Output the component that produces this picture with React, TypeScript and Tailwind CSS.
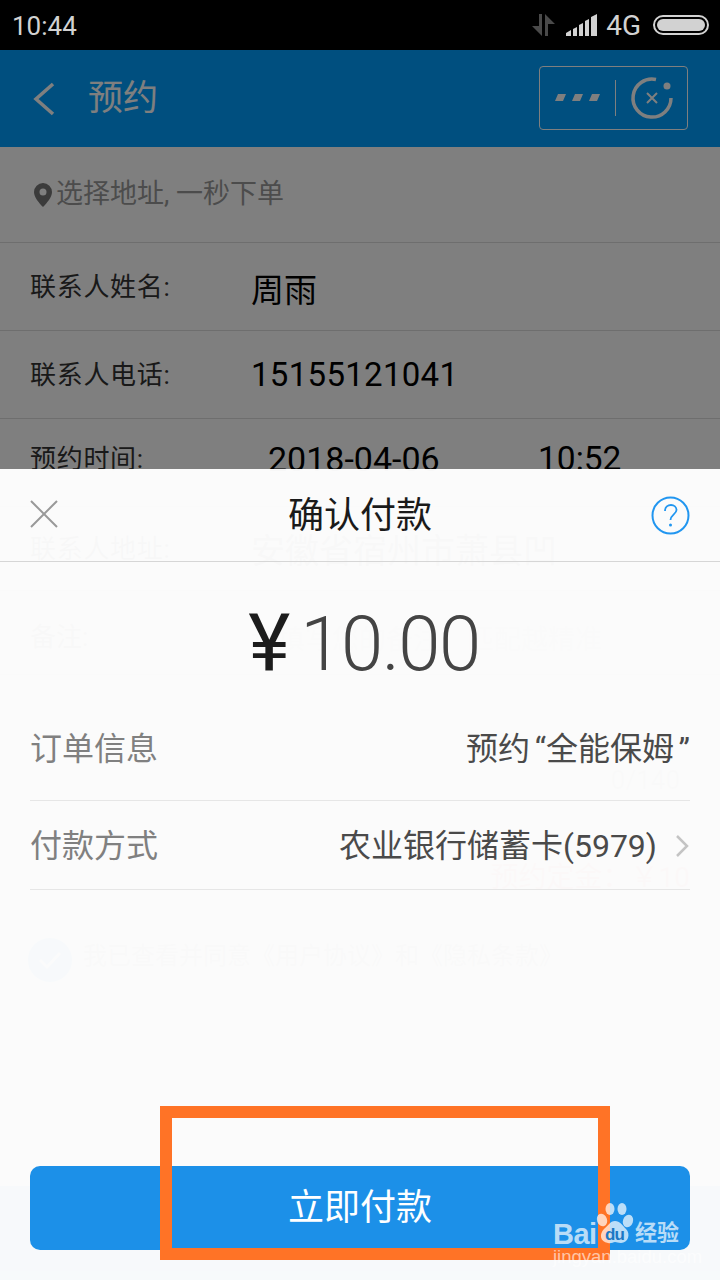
import React from "react";

const font = { fontFamily: 'Roboto, "Noto Sans CJK SC", sans-serif' };
const arial = { fontFamily: '"Liberation Sans", sans-serif' };

function Row({ label, value, valueClass, h }: { label: string; value: string; valueClass: string; h: string }) {
  return (
    <div className={`flex items-center border-b border-[#dcdcdc] ${h}`}>
      <span className="w-[251px] shrink-0 pl-[30px] text-[26px] leading-[36px] tracking-[0.7px] text-[#333]">{label}</span>
      <span className={valueClass}>{value}</span>
    </div>
  );
}

function Watermark() {
  return (
    <div className="absolute left-[553px] top-[1203px] h-[60px] w-[130px] text-white/70">
      <span className="absolute left-0 top-[15px] text-[29px] font-bold leading-[32px] tracking-[-0.5px]" style={arial}>Bai</span>
      <svg className="absolute left-[42px] top-0" width="42" height="44" viewBox="0 0 42 44" fill="currentColor">
        <ellipse cx="7" cy="17" rx="5" ry="6.500" transform="rotate(-20 7 17)" />
        <ellipse cx="15" cy="6" rx="4.500" ry="6" />
        <ellipse cx="27" cy="6" rx="4.500" ry="6" />
        <ellipse cx="33" cy="18" rx="5" ry="6.500" transform="rotate(20 33 18)" />
        <path d="M20 18c5 0 7 4 11 8 5 5 2 14-5 14-3 0-4-1-6-1s-4 2-7 1c-8-1-9-9-4-14 4-3 6-8 11-8z" />
      </svg>
      <span className="absolute left-[52px] top-[22px] text-[17px] font-bold leading-[20px] tracking-[-1px] text-[#1c78c4]" style={arial}>du</span>
      <span className="absolute left-[82px] top-[16px] text-[22px] font-bold leading-[28px]">经验</span>
      <span className="absolute left-0 top-[43px] whitespace-nowrap text-[18.500px] leading-[22px] text-white/60" style={arial}>jingyan.baidu.com</span>
    </div>
  );
}

export default function App() {
  return (
    <div className="relative flex h-[1280px] w-[720px] flex-col overflow-hidden bg-white" style={font}>
      {/* status bar */}
      <div className="flex h-[50px] shrink-0 items-center bg-black pl-[12px] pr-[11px] text-[#d2d2d2]">
        <span className="pt-[2px] text-[26px] leading-none">10:44</span>
        <div className="ml-auto flex items-center">
          <svg width="23" height="22" viewBox="0 0 23 22" fill="#4a4a4a">
            <path d="M0 12h7V0h3v22L0 12z" />
            <path d="M13 0l10 10h-7v12h-3V0z" />
          </svg>
          <svg className="ml-[11px]" width="32" height="22" viewBox="0 0 32 22" fill="#d2d2d2">
            <path d="M0 19l5-3v6H0zM7 15l4-2v9H7zM13 11l4-2v13h-4zM19 7l4-2v17h-4zM25 3l6-3v22h-6z" />
          </svg>
          <span className="ml-[8px] pt-[2px] text-[28px] leading-none">4G</span>
          <div className="ml-[12px] flex h-[20px] w-[56px] items-center rounded-[10px] border-2 border-[#d2d2d2] p-[2px]">
            <div className="h-full w-full rounded-[7px] bg-[#d2d2d2]" />
          </div>
        </div>
      </div>

      {/* page under the sheet */}
      <div className="flex h-[97px] shrink-0 items-center bg-[#009fff] pl-[32px] pr-[32px] text-white">
        <svg width="24" height="34" viewBox="0 0 24 34" fill="none" stroke="currentColor" strokeWidth="3.500">
          <path d="M21 2L4 17l17 15" />
        </svg>
        <span className="ml-[32px] pt-[2px] text-[35px]">预约</span>
        <div className="mb-[2px] ml-auto flex h-[64px] w-[149px] items-center rounded-[4px] border border-white">
          <svg className="ml-[15px]" width="45" height="7" viewBox="0 0 45 7" fill="currentColor">
            <path d="M3 0h8L8 7H0zM20 0h8l-3 7h-8zM37 0h8l-3 7h-8z" />
          </svg>
          <div className="ml-[15px] h-[36px] w-px bg-white" />
          <svg className="ml-[13px]" width="46" height="46" viewBox="0 0 46 46" fill="none" stroke="currentColor">
            <path d="M27 4.500A19 19 0 1 0 42 23" strokeWidth="3.500" />
            <circle cx="38" cy="11" r="3.500" fill="currentColor" stroke="none" />
            <path d="M18 18l10 10M28 18L18 28" strokeWidth="2" />
          </svg>
        </div>
      </div>

      <div className="flex h-[96px] shrink-0 items-center border-b border-[#dcdcdc] pl-[34px] text-[27px] text-[#999]">
        <svg width="18" height="24" viewBox="0 0 18 24" fill="#777" fillRule="evenodd">
          <path d="M9 0a9 9 0 0 1 9 9c0 5-5 11-9 15C5 20 0 14 0 9a9 9 0 0 1 9-9zm0 5.500a3.500 3.500 0 1 0 0 7 3.500 3.500 0 0 0 0-7z" />
        </svg>
        <span className="ml-[4px]">选择地址, 一秒下单</span>
      </div>
      <Row h="h-[88px] shrink-0" label="联系人姓名:" value="周雨" valueClass="pt-[8px] text-[33px] leading-[40px] text-black" />
      <Row h="h-[88px] shrink-0" label="联系人电话:" value="15155121041" valueClass="text-[33px] tracking-[0.3px] text-black" />
      <div className="flex h-[88px] shrink-0 items-center border-b border-[#dcdcdc] pb-[8px] pl-[30px] text-black">
        <span className="w-[238px] shrink-0 text-[26px] leading-[36px] tracking-[0.7px] text-[#333]">预约时间:</span>
        <span className="w-[270px] text-[34px] leading-[40px]">2018-04-06</span>
        <span className="text-[33.500px] leading-[40px]">10:52</span>
      </div>
      <Row h="h-[84px] shrink-0" label="联系人地址:" value="安徽省宿州市萧县凹" valueClass="pt-[4px] text-[34px] leading-[40px] text-[#444]" />
      <div className="flex h-[84px] shrink-0 items-center border-b border-[#dcdcdc] pt-[8px] text-[#555]">
        <span className="w-[251px] shrink-0 pl-[30px] text-[26px] leading-[36px]">备注:</span>
        <span className="whitespace-nowrap pt-[6px] text-[27px] leading-[36px] text-[#bbb]">请填写您的备注，匹配越精准</span>
      </div>
      <div className="h-[263px] shrink-0 pt-[90px] text-right">
        <div className="pr-[40px] text-[26px] leading-[30px] text-[#aaa]">0/140</div>
        <div className="mt-[66px] pr-[30px] text-[28px] leading-[34px] text-[#f66]">预约定金：￥10</div>
      </div>
      <div className="flex shrink-0 items-center pl-[28px]">
        <div className="flex h-[44px] w-[44px] items-center justify-center rounded-full bg-[#009fff]">
          <svg width="24" height="18" viewBox="0 0 24 18" fill="none" stroke="white" strokeWidth="3">
            <path d="M2 9l7 7L22 2" />
          </svg>
        </div>
        <span className="mb-[8px] ml-[11px] text-[24px] text-[#888]">我已查看并同意《用户协议》和《隐私条款》</span>
      </div>
      <div className="mt-auto flex h-[94px] shrink-0 items-center justify-center bg-[#009fff] pt-[4px] text-[36px] text-white">立即预约</div>

      {/* dim layer over the page, below the status bar */}
      <div className="absolute inset-x-0 bottom-0 top-[50px] bg-black/50" />

      {/* payment sheet */}
      <div className="absolute inset-x-0 bottom-0 top-[469px] flex flex-col bg-white/97">
        <div className="relative flex h-[93px] shrink-0 items-center justify-center border-b border-[#d6d6d6]">
          <svg className="absolute left-[30px] top-[31px]" width="28" height="28" viewBox="0 0 28 28" stroke="#999" strokeWidth="2" fill="none">
            <path d="M1 1l26 26M27 1L1 27" />
          </svg>
          <span className="pt-[2px] text-[36px] text-[#1a1a1a]">确认付款</span>
          <svg className="absolute right-[30px] top-[27px]" width="39" height="39" viewBox="0 0 39 39" fill="none" stroke="#2196f0" strokeWidth="2">
            <circle cx="19.500" cy="19.500" r="18" />
            <path d="M14 15c0-4 3-6 6-6s5.500 2 5.500 5c0 4-6 5-6 10" strokeWidth="1.800" />
            <circle cx="19.500" cy="29" r="1.500" fill="#2196f0" stroke="none" />
          </svg>
        </div>
        <div className="flex h-[139px] shrink-0 items-center justify-center pl-[8px] pt-[24px] text-[76px] font-light leading-none text-[#444]">
          <span className="mr-[10px] text-[80px] font-normal text-[#1c1c1c]">¥</span>
          <span className="tracking-[-1.500px]">10.00</span>
        </div>
        <div className="mx-[30px] flex h-[100px] shrink-0 items-center justify-between border-b border-[#e6e6e6] pb-[4px] text-[32px]">
          <span className="text-[#808080]">订单信息</span>
          <span className="flex text-[#4a4a4a]">
            预约<span className="w-[16px] text-right">“</span>全能保姆<span className="w-[16px] text-right">”</span>
          </span>
        </div>
        <div className="mx-[30px] flex h-[89px] shrink-0 items-center border-b border-[#e6e6e6] pt-[2px] text-[32px]">
          <span className="text-[#808080]">付款方式</span>
          <span className="ml-auto text-[#4a4a4a]">农业银行储蓄卡(5979)</span>
          <svg className="ml-[18px] mr-[1px]" width="14" height="24" viewBox="0 0 14 24" fill="none" stroke="#c4c4c4" strokeWidth="2.500">
            <path d="M2 2l10 10L2 22" />
          </svg>
        </div>
        <div className="mx-[30px] mb-[30px] mt-auto flex h-[84px] shrink-0 items-center justify-center rounded-[10px] bg-[#1c90e8] text-[36px] text-white">
          立即付款
        </div>
      </div>

      {/* orange annotation */}
      <div className="absolute left-[160px] top-[1106px] h-[154px] w-[450px] border-[12.500px] border-[#ff7326]" />
      <Watermark />
    </div>
  );
}
